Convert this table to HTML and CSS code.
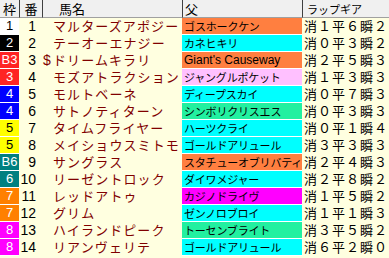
FILE: index.html
```html
<!DOCTYPE html>
<html lang="ja">
<head>
<meta charset="utf-8">
<link rel="stylesheet" href="styles.css">
</head>
<body>
<div class="table">
  <div class="hd hd-waku">枠</div>
  <div class="hd hd-num">番</div>
  <div class="hd hd-name">馬名</div>
  <div class="hd hd-sire">父</div>
  <div class="hd hd-lap">ラップギア</div>

  <div class="waku w1">1</div><div class="num">1</div><div class="name">マルターズアポジー</div><div class="sire s-or">ゴスホークケン</div><div class="lap">消１平６瞬２</div>
  <div class="waku w2">2</div><div class="num">2</div><div class="name">テーオーエナジー</div><div class="sire s-cy">カネヒキリ</div><div class="lap">消０平３瞬２</div>
  <div class="waku w3">B3</div><div class="num">3</div><div class="name marked"><span class="mark">$</span>ドリームキラリ</div><div class="sire s-or latin">Giant's Causeway</div><div class="lap">消２平５瞬３</div>
  <div class="waku w3">3</div><div class="num">4</div><div class="name">モズアトラクション</div><div class="sire s-pk">ジャングルポケット</div><div class="lap">消１平３瞬３</div>
  <div class="waku w4">4</div><div class="num">5</div><div class="name">モルトベーネ</div><div class="sire s-cy">ディープスカイ</div><div class="lap">消０平７瞬３</div>
  <div class="waku w4">4</div><div class="num">6</div><div class="name">サトノティターン</div><div class="sire s-gr">シンボリクリスエス</div><div class="lap">消０平３瞬３</div>
  <div class="waku w5">5</div><div class="num">7</div><div class="name">タイムフライヤー</div><div class="sire s-cy">ハーツクライ</div><div class="lap">消０平１瞬４</div>
  <div class="waku w5">5</div><div class="num">8</div><div class="name">メイショウスミトモ</div><div class="sire s-cy">ゴールドアリュール</div><div class="lap">消３平３瞬３</div>
  <div class="waku w6">B6</div><div class="num">9</div><div class="name">サングラス</div><div class="sire s-or">スタチューオブリバティ</div><div class="lap">消２平４瞬３</div>
  <div class="waku w6">6</div><div class="num">10</div><div class="name">リーゼントロック</div><div class="sire s-cy">ダイワメジャー</div><div class="lap">消２平８瞬２</div>
  <div class="waku w7">7</div><div class="num">11</div><div class="name">レッドアトゥ</div><div class="sire s-mg">カジノドライヴ</div><div class="lap">消１平５瞬２</div>
  <div class="waku w7">7</div><div class="num">12</div><div class="name">グリム</div><div class="sire s-cy">ゼンノロブロイ</div><div class="lap">消１平１瞬３</div>
  <div class="waku w8">8</div><div class="num">13</div><div class="name">ハイランドピーク</div><div class="sire s-gr">トーセンブライト</div><div class="lap">消３平５瞬２</div>
  <div class="waku w8">8</div><div class="num">14</div><div class="name">リアンヴェリテ</div><div class="sire s-cy">ゴールドアリュール</div><div class="lap">消６平２瞬０</div>
</div>
</body>
</html>
```

FILE: styles.css
```css
html, body {
  margin: 0;
  padding: 0;
  background: #ffffe0;
}

body {
  width: 389px;
  height: 258px;
  overflow: hidden;
  font-family: "Noto Sans CJK JP", sans-serif;
  color: #000;
}

.table {
  display: grid;
  grid-template-columns: 19px 23px 140px 120px 87px;
  grid-template-rows: 18px;
  grid-auto-rows: 17px;
}

.table > div {
  box-sizing: border-box;
  border-bottom: 1px solid #ffffe0;
  white-space: nowrap;
  display: flex;
  align-items: center;
  line-height: 16px;
  min-width: 0;
}

.table > .hd {
  background: #f0f0f0;
  border-bottom: 1px solid #a0a0a0;
  font-size: 13px;
}

.hd-waku { justify-content: center; }
.hd-num { border-left: 1px solid #404040; justify-content: center; }
.hd-name { border-left: 1px solid #404040; padding-left: 16px; }
.hd-sire { border-left: 1px solid #404040; padding-left: 2px; }
.table > .hd-lap { border-left: 1px solid #404040; padding-left: 4px; font-size: 11px; }

.table > .waku {
  justify-content: center;
  font-family: "Liberation Sans", sans-serif;
  font-size: 13px;
  color: #fff;
  border-bottom-color: #fff;
}

.table > .w1 { background: #fff; color: #000; }
.table > .w2 { background: #000; }
.table > .w3 { background: #ff2424; }
.table > .w4 { background: #0000ff; }
.table > .w5 { background: #ffff00; color: #000; }
.table > .w6 { background: #008080; }
.table > .w7 { background: #ff8000; }
.table > .w8 { background: #ff00ff; }

.num {
  justify-content: flex-end;
  padding-right: 6px;
  font-family: "Liberation Sans", sans-serif;
  font-size: 14px;
}

.name {
  padding-left: 11px;
  font-size: 13px;
  letter-spacing: 1.1px;
  color: #800000;
}

.table > .marked {
  padding-left: 1px;
}

.mark {
  display: inline-block;
  width: 10px;
  font-family: "Liberation Sans", sans-serif;
  font-size: 14px;
  letter-spacing: 0;
}

.table > .sire {
  padding-left: 2px;
  font-size: 11px;
  letter-spacing: -0.2px;
  border-bottom-color: #fff;
}

.table > .latin {
  font-family: "Liberation Sans", sans-serif;
  font-size: 12px;
  letter-spacing: 0;
}

.s-or { background: #ff7f40; }
.s-cy { background: #00ffff; }
.s-pk { background: #ffc0ff; }
.s-gr { background: #22f0a0; }
.s-mg { background: #ff00ff; }

.lap {
  padding-left: 2px;
  font-size: 13px;
  letter-spacing: 1px;
}
```
